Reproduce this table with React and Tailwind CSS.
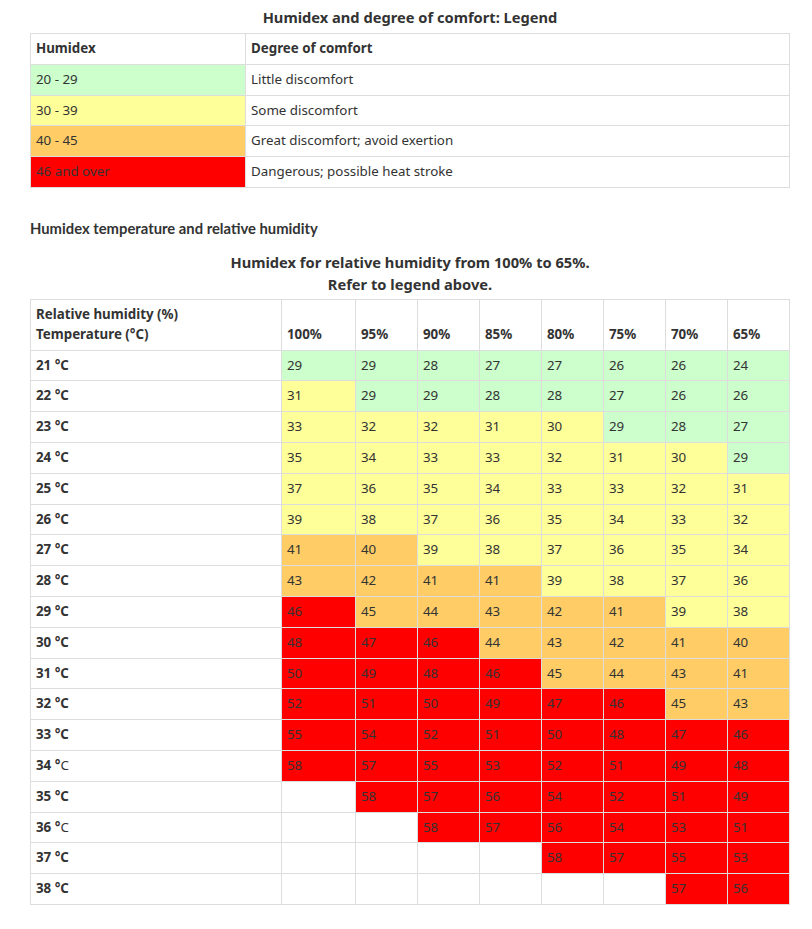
const legend = [
  { range: '20 - 29', label: 'Little discomfort', bg: 'bg-[#ccffcc]' },
  { range: '30 - 39', label: 'Some discomfort', bg: 'bg-[#ffff99]' },
  { range: '40 - 45', label: 'Great discomfort; avoid exertion', bg: 'bg-[#ffcc66]' },
  { range: '46 and over', label: 'Dangerous; possible heat stroke', bg: 'bg-[#ff0000]' }
]

const humidities = ['100%', '95%', '90%', '85%', '80%', '75%', '70%', '65%']

// temp, values (null = blank), plainC = "C" not bold like the source page
const rows = [
  [21, [29, 29, 28, 27, 27, 26, 26, 24]],
  [22, [31, 29, 29, 28, 28, 27, 26, 26]],
  [23, [33, 32, 32, 31, 30, 29, 28, 27]],
  [24, [35, 34, 33, 33, 32, 31, 30, 29]],
  [25, [37, 36, 35, 34, 33, 33, 32, 31]],
  [26, [39, 38, 37, 36, 35, 34, 33, 32]],
  [27, [41, 40, 39, 38, 37, 36, 35, 34]],
  [28, [43, 42, 41, 41, 39, 38, 37, 36]],
  [29, [46, 45, 44, 43, 42, 41, 39, 38]],
  [30, [48, 47, 46, 44, 43, 42, 41, 40]],
  [31, [50, 49, 48, 46, 45, 44, 43, 41]],
  [32, [52, 51, 50, 49, 47, 46, 45, 43]],
  [33, [55, 54, 52, 51, 50, 48, 47, 46]],
  [34, [58, 57, 55, 53, 52, 51, 49, 48], true],
  [35, [null, 58, 57, 56, 54, 52, 51, 49]],
  [36, [null, null, 58, 57, 56, 54, 53, 51], true],
  [37, [null, null, null, null, 58, 57, 55, 53]],
  [38, [null, null, null, null, null, null, 57, 56]]
]

const cellColor = (v) => {
  if (v == null) return 'bg-white'
  if (v < 30) return 'bg-[#ccffcc]'
  if (v < 40) return 'bg-[#ffff99]'
  if (v < 46) return 'bg-[#ffcc66]'
  return 'bg-[#ff0000]'
}

const td = 'border border-[#dddddd] px-[5px] py-[5px] leading-[19.8px] text-left'

export default function App() {
  return (
    <div className="bg-white min-h-[929px] text-[13.33px] text-[#333333] font-['Noto_Sans',sans-serif]">
      <div className="w-[760px] ml-[30px] pt-[7px]">
        {/* Legend */}
        <div className="text-center font-bold text-[14.67px] leading-[20px] mb-[6px]">
          Humidex and degree of comfort: Legend
        </div>
        <table className="w-full table-fixed border-collapse">
          <colgroup>
            <col className="w-[215px]" />
            <col />
          </colgroup>
          <thead>
            <tr>
              <th className={td + ' font-bold'}>Humidex</th>
              <th className={td + ' font-bold'}>Degree of comfort</th>
            </tr>
          </thead>
          <tbody>
            {legend.map((l) => (
              <tr key={l.range}>
                <td className={td + ' ' + l.bg}>{l.range}</td>
                <td className={td}>{l.label}</td>
              </tr>
            ))}
          </tbody>
        </table>

        <h2 className="mt-[30px] font-['Lato',sans-serif] font-bold text-[14.8px] leading-[20px] text-[#333333]">
          Humidex temperature and relative humidity
        </h2>

        {/* Main table */}
        <div className="mt-[13px] text-center font-bold text-[14.67px] leading-[22px] mb-[4px]">
          Humidex for relative humidity from 100% to 65%.
          <br />
          Refer to legend above.
        </div>
        <table className="w-full table-fixed border-collapse">
          <colgroup>
            <col className="w-[251px]" />
            <col className="w-[74px]" />
            {humidities.slice(1).map((h) => (
              <col key={h} className="w-[62px]" />
            ))}
          </colgroup>
          <thead>
            <tr>
              <th className={td + ' font-bold align-bottom'}>
                Relative humidity (%)
                <br />
                Temperature (°C)
              </th>
              {humidities.map((h) => (
                <th key={h} className={td + ' font-bold align-bottom'}>
                  {h}
                </th>
              ))}
            </tr>
          </thead>
          <tbody>
            {rows.map(([t, vals, plainC]) => (
              <tr key={t}>
                <td className={td}>
                  {plainC ? (
                    <>
                      <b>{t} °</b>C
                    </>
                  ) : (
                    <b>{t} °C</b>
                  )}
                </td>
                {vals.map((v, i) => (
                  <td key={i} className={td + ' ' + cellColor(v)}>
                    {v ?? ''}
                    {v == null && <span className="invisible">0</span>}
                  </td>
                ))}
              </tr>
            ))}
          </tbody>
        </table>
      </div>
    </div>
  )
}
